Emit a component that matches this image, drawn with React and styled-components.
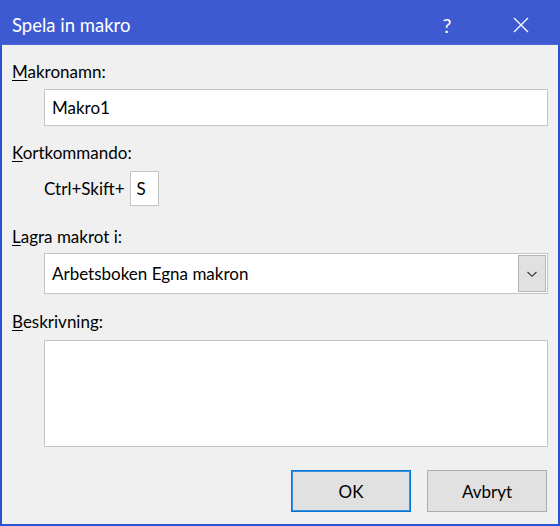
import styled, { createGlobalStyle } from "styled-components";

const GlobalStyle = createGlobalStyle`
  html, body {
    margin: 0;
    padding: 0;
    background: #f0f0f0;
  }
  * {
    box-sizing: border-box;
  }
`;

function App() {
  return (
    <>
      <GlobalStyle />
      <Window>
        <TitleBar>
          <Title>Spela in makro</Title>
          <TitleButtons>
            <TitleButton width={70}>?</TitleButton>
            <TitleButton width={78}>
              <svg width="16" height="16" viewBox="0 0 16 16">
                <path d="M1 1 L15 15 M15 1 L1 15" stroke="#fff" strokeWidth="1.3" fill="none" />
              </svg>
            </TitleButton>
          </TitleButtons>
        </TitleBar>

        <Body>
          <Label top={16}><u>M</u>akronamn:</Label>
          <TextField>Makro1</TextField>

          <Label top={16}><u>K</u>ortkommando:</Label>
          <ShortcutRow>
            <span>Ctrl+Skift+</span>
            <KeyBox>S</KeyBox>
          </ShortcutRow>

          <Label top={20}><u>L</u>agra makrot i:</Label>
          <Select>
            <span>Arbetsboken Egna makron</span>
            <DropButton>
              <svg width="12" height="8" viewBox="0 0 12 8">
                <path d="M1.5 2 L6 6.3 L10.5 2" stroke="#333" strokeWidth="1.1" fill="none" />
              </svg>
            </DropButton>
          </Select>

          <Label top={17}><u>B</u>eskrivning:</Label>
          <TextArea />

          <ButtonRow>
            <Button primary>OK</Button>
            <Button>Avbryt</Button>
          </ButtonRow>
        </Body>
      </Window>
    </>
  );
}

const Window = styled.div`
  width: 560px;
  height: 526px;
  border: 2px solid #2f51d6;
  border-top: none;
  background: #f0f0f0;
  display: flex;
  flex-direction: column;
  font-family: Lato, "Noto Sans", sans-serif;
  color: #000;
`;

const TitleBar = styled.div`
  height: 45px;
  margin: 0 -2px;
  background: #3d5ad1;
  border-bottom: 1px solid #4a66d8;
  display: flex;
  align-items: center;
  justify-content: space-between;
  padding: 7px 0 0 12px;
`;

const Title = styled.div`
  color: #fff;
  font-size: 18.5px;
  padding-bottom: 2px;
`;

const TitleButtons = styled.div`
  display: flex;
  height: 100%;
`;

const TitleButton = styled.div`
  width: ${(p) => p.width}px;
  height: 100%;
  display: flex;
  align-items: center;
  justify-content: center;
  color: #fff;
  font-size: 20px;
  padding-bottom: 2px;
`;

const Body = styled.div`
  flex: 1;
  display: flex;
  flex-direction: column;
  padding: 0 10px 0 10px;
`;

const Label = styled.div`
  margin-top: ${(p) => p.top}px;
  height: 22px;
  line-height: 22px;
  font-size: 17px;
  u {
    text-decoration-thickness: 1px;
    text-underline-offset: 2px;
  }
`;

const TextField = styled.div`
  margin: 6px 0 0 32px;
  height: 37px;
  background: #fff;
  border: 1px solid #c4c4c4;
  display: flex;
  align-items: center;
  padding-left: 7px;
  font-size: 17px;
`;

const ShortcutRow = styled.div`
  margin: 7px 0 0 32px;
  display: flex;
  align-items: center;
  gap: 5px;
  font-size: 17px;
`;

const KeyBox = styled.div`
  width: 29px;
  height: 35px;
  background: #fff;
  border: 1px solid #c4c4c4;
  display: flex;
  align-items: center;
  padding-left: 6px;
  font-size: 17px;
`;

const Select = styled.div`
  margin: 5px 0 0 32px;
  height: 41px;
  background: #fff;
  border: 1px solid #c4c4c4;
  display: flex;
  align-items: center;
  justify-content: space-between;
  padding: 1px 1px 1px 7px;
  font-size: 17px;
`;

const DropButton = styled.div`
  width: 28px;
  height: 100%;
  background: #e1e1e1;
  border: 1px solid #b4b4b4;
  display: flex;
  align-items: center;
  justify-content: center;
`;

const TextArea = styled.div`
  margin: 7px 0 0 32px;
  height: 107px;
  background: #fff;
  border: 1px solid #c4c4c4;
`;

const ButtonRow = styled.div`
  margin-top: 23px;
  display: flex;
  justify-content: flex-end;
  gap: 16px;
  padding-right: 1px;
`;

const Button = styled.div`
  width: 120px;
  height: 42px;
  background: #e1e1e1;
  border: 1px solid ${(p) => (p.primary ? "#0078d7" : "#adadad")};
  display: flex;
  align-items: center;
  justify-content: center;
  font-size: 17px;
  box-shadow: ${(p) => (p.primary ? "inset 0 0 0 1px #3c8fdc" : "none")};
`;

export default App;
